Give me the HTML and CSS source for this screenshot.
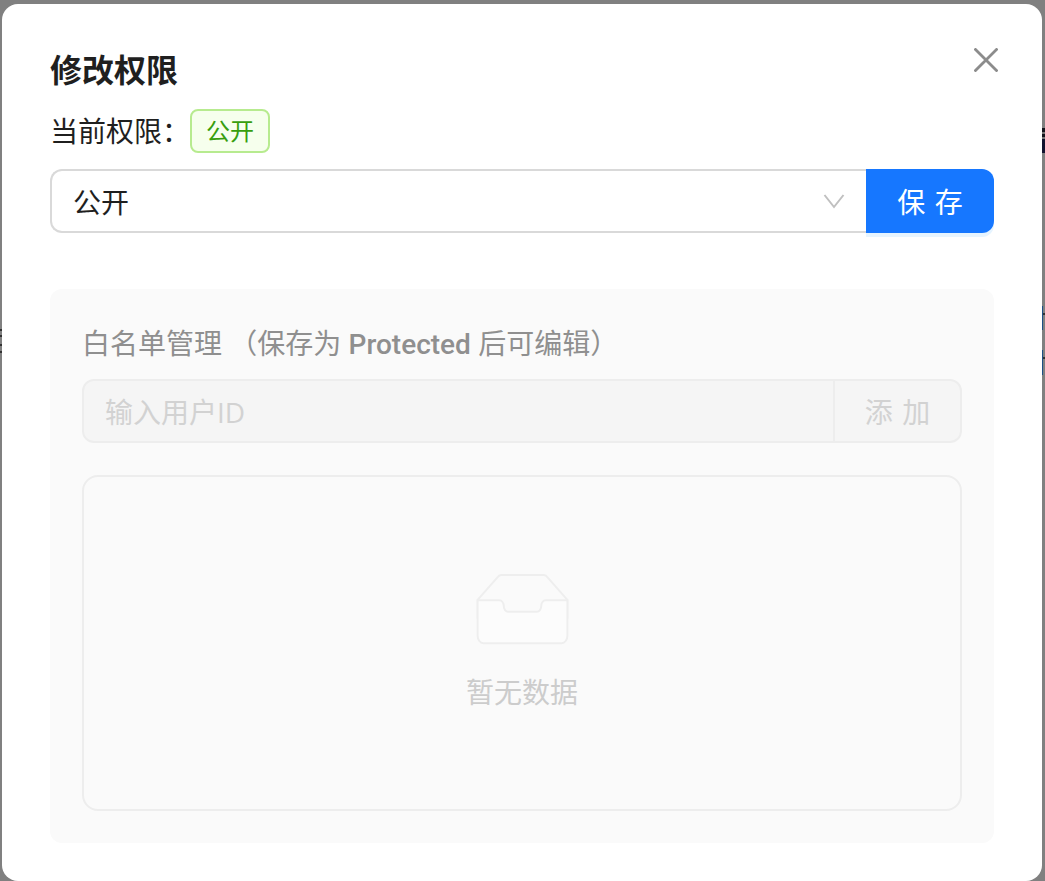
FILE: index.html
```html
<!DOCTYPE html>
<html lang="zh-CN">
<head>
<meta charset="utf-8">
<title>修改权限</title>
<link rel="stylesheet" href="styles.css">
</head>
<body>
<div class="bg-mark mark-right-dark"></div>
<div class="bg-mark mark-right-blue mark-blue-a"></div>
<div class="bg-mark mark-right-blue mark-blue-b"></div>
<div class="bg-mark mark-left-a"></div>
<div class="bg-mark mark-left-b"></div>
<div class="modal">
  <button class="close" aria-label="关闭">
    <svg width="24" height="24" viewBox="0 0 24 24"><path d="M1.500 1.500 22.500 22.500M22.500 1.500 1.500 22.500" fill="none" stroke="#8c8c8c" stroke-width="2.800" stroke-linecap="square"/></svg>
  </button>
  <h1 class="title">修改权限</h1>
  <div class="current">
    <span class="current-label">当前权限：</span>
    <span class="tag">公开</span>
  </div>
  <div class="select-row">
    <div class="select">
      <span class="select-value">公开</span>
      <svg class="chevron" width="22" height="15" viewBox="0 0 22 15"><path d="M1.500 1 11 13 20.500 1" fill="none" stroke="#c0c0c0" stroke-width="2"/></svg>
    </div>
    <button class="save">保 存</button>
  </div>
  <section class="panel">
    <h2 class="panel-title">白名单管理 （保存为 <span class="latin">Protected</span> 后可编辑）</h2>
    <div class="add-row">
      <div class="add-input">输入用户ID</div>
      <button class="add-btn">添 加</button>
    </div>
    <div class="list">
      <svg class="empty-icon" width="125" height="80" viewBox="0 0 64 41">
        <g transform="translate(0 1)" fill="none" fill-rule="evenodd">
          <g stroke="#eeeeee">
            <path d="M55 12.76L44.854 1.258C44.367.474 43.656 0 42.907 0H21.093c-.749 0-1.46.474-1.947 1.257L9 12.761V22h46v-9.24z"/>
            <path d="M41.613 15.931c0-1.605.994-2.93 2.227-2.931H55v18.137C55 33.26 53.68 35 52.05 35h-40.1C10.32 35 9 33.259 9 31.137V13h11.16c1.233 0 2.227 1.323 2.227 2.928v.022c0 1.605 1.005 2.901 2.237 2.901h14.752c1.232 0 2.237-1.308 2.237-2.913v-.007z" fill="#fcfcfc"/>
          </g>
        </g>
      </svg>
      <div class="empty-text">暂无数据</div>
    </div>
  </section>
</div>
</body>
</html>
```
FILE: styles.css
```css
* { box-sizing: border-box; }
html, body { margin: 0; height: 100%; }
body {
  background: #808080;
  overflow: hidden;
  font-family: "Open Sans", "Noto Sans CJK SC", sans-serif;
  color: #1f1f1f;
}
.bg-mark { position: absolute; }
.mark-right-dark {
  left: 1042px;
  top: 128px;
  width: 3px;
  height: 25px;
  background: linear-gradient(#14141c 0 4px, #777 4px 6px, #14141c 6px 9px, #777 9px 11px, #12122e 11px 25px);
}
.mark-right-blue { left: 1042px; width: 1px; background: #1d4f86; }
.mark-right-blue::after {
  content: "";
  position: absolute;
  left: 1px;
  top: 7px;
  width: 2px;
  height: 2px;
  background: #333;
}
.mark-blue-a { top: 306px; height: 24px; }
.mark-blue-b { top: 350px; height: 25px; }
.mark-left-a { left: 0; top: 329px; width: 2px; height: 8px; background: repeating-linear-gradient(#333 0 2px, #808080 2px 6px); }
.mark-left-b { left: 0; top: 344px; width: 2px; height: 9px; background: repeating-linear-gradient(#333 0 2px, #808080 2px 7px); }

.modal {
  position: absolute;
  left: 2px;
  top: 4px;
  width: 1040px;
  height: 877px;
  background: #fff;
  border-radius: 16px;
  padding: 40px 48px 0;
}
.close {
  position: absolute;
  right: 44px;
  top: 44px;
  padding: 0;
  width: 24px;
  height: 24px;
  border: 0;
  background: none;
  display: flex;
}
.title {
  margin: 0;
  font-size: 32px;
  line-height: 52px;
  font-weight: 700;
}
.current {
  display: flex;
  align-items: center;
  height: 44px;
  margin-top: 13px;
}
.current-label { font-size: 28px; line-height: 44px; width: 140px; }
.tag {
  height: 44px;
  padding: 0 14px;
  font-size: 24px;
  line-height: 40px;
  color: #389e0d;
  background: #f6ffed;
  border: 2px solid #b7eb8f;
  border-radius: 8px;
}
.select-row { display: flex; margin-top: 16px; height: 64px; }
.select {
  flex: 1;
  display: flex;
  align-items: center;
  justify-content: space-between;
  padding: 0 21px 0 21px;
  border: 2px solid #d9d9d9;
  border-right: 0;
  border-radius: 12px 0 0 12px;
}
.select-value { font-size: 28px; }
.save {
  width: 128px;
  border: 0;
  padding: 0;
  font: inherit;
  font-size: 28px;
  word-spacing: 2px;
  color: #fff;
  background: #1677ff;
  border-radius: 0 12px 12px 0;
  box-shadow: 0 4px 0 #e6f4ff;
}
.panel {
  margin-top: 56px;
  height: 554px;
  padding: 32px;
  background: #fafafa;
  border-radius: 12px;
}
.panel-title {
  margin: 0;
  height: 44px;
  font-size: 28px;
  line-height: 44px;
  font-weight: 400;
  color: #8f8f8f;
}
.latin { font-family: Roboto, sans-serif; font-weight: 500; }
.add-row {
  display: flex;
  height: 64px;
  margin-top: 14px;
  background: #f5f5f5;
  border: 2px solid #ededed;
  border-radius: 12px;
}
.add-input {
  flex: 1;
  padding-left: 21px;
  font-size: 28px;
  line-height: 62px;
  color: #d2d2d2;
}
.add-btn {
  width: 127px;
  padding: 0;
  border: 0;
  border-left: 2px solid #ededed;
  background: none;
  font: inherit;
  font-size: 28px;
  word-spacing: 2px;
  color: #d2d2d2;
}
.list {
  margin-top: 32px;
  height: 336px;
  border: 2px solid #ededed;
  border-radius: 16px;
  display: flex;
  flex-direction: column;
  align-items: center;
  padding-top: 96px;
}
.empty-icon { display: block; }
.empty-text {
  margin-top: 17px;
  font-size: 28px;
  line-height: 44px;
  color: #cccccc;
}
```
